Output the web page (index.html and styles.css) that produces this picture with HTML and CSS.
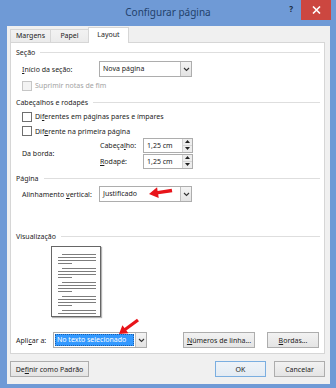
FILE: index.html
```html
<!DOCTYPE html>
<html lang="pt">
<head>
<meta charset="utf-8">
<title>Configurar página</title>
<link rel="stylesheet" href="styles.css">
</head>
<body>
<div class="window">
  <div class="titlebar">
    <div class="tb-side"></div>
    <div class="title">Configurar página</div>
    <div class="tb-side controls">
      <span class="help">?</span>
      <span class="close"><svg width="9" height="8" viewBox="0 0 9 8"><path d="M1 0.5 L8 7.5 M8 0.5 L1 7.5" stroke="#fff" stroke-width="1.6"/></svg></span>
    </div>
  </div>
  <div class="client">
    <div class="tabs">
      <div class="tab">Margens</div>
      <div class="tab">Papel</div>
      <div class="tab active">Layout</div>
    </div>
    <div class="panel">
      <div class="group"><span>Seção</span><i class="rule"></i></div>
      <div class="row indent mt1">
        <span class="lbl w77"><u>I</u>nício da seção:</span>
        <div class="select w93"><span class="val">Nova página</span><span class="drop"><svg width="7" height="5" viewBox="0 0 7 5"><path d="M1 1 L3.5 3.5 L6 1" fill="none" stroke="#333" stroke-width="1.1"/></svg></span></div>
      </div>
      <div class="check indent mt2 disabled"><span class="box"></span><span>Suprimir notas de fim</span></div>
      <div class="group mt2"><span>Cabeçalhos e rodapés</span><i class="rule"></i></div>
      <div class="check indent"><span class="box"></span><span>Di<u>f</u>erentes em páginas pares e ímpares</span></div>
      <div class="check indent mt2 h12"><span class="box"></span><span>Dif<u>e</u>rente na primeira página</span></div>
      <div class="borda indent">
        <span class="lbl w78">Da borda:</span>
        <div class="spins">
          <div class="spinrow">
            <span class="lbl w43">Cabeça<u>l</u>ho:</span>
            <div class="spin"><span class="val">1,25 cm</span><span class="arrows"><span class="half"><svg width="5" height="3" viewBox="0 0 5 3"><path d="M0 3 L2.5 0 L5 3Z" fill="#222"/></svg></span><span class="half"><svg width="5" height="3" viewBox="0 0 5 3"><path d="M0 0 L2.5 3 L5 0Z" fill="#222"/></svg></span></span></div>
          </div>
          <div class="spinrow">
            <span class="lbl w43"><u>R</u>odapé:</span>
            <div class="spin"><span class="val">1,25 cm</span><span class="arrows"><span class="half"><svg width="5" height="3" viewBox="0 0 5 3"><path d="M0 3 L2.5 0 L5 3Z" fill="#222"/></svg></span><span class="half"><svg width="5" height="3" viewBox="0 0 5 3"><path d="M0 0 L2.5 3 L5 0Z" fill="#222"/></svg></span></span></div>
          </div>
        </div>
      </div>
      <div class="group mt1"><span>Página</span><i class="rule"></i></div>
      <div class="row indent">
        <span class="lbl w77">Alinhamento <u>v</u>ertical:</span>
        <div class="select w93"><span class="val">Justificado</span><span class="drop"><svg width="7" height="5" viewBox="0 0 7 5"><path d="M1 1 L3.5 3.5 L6 1" fill="none" stroke="#333" stroke-width="1.1"/></svg></span></div>
      </div>
      <div class="group mt26"><span>Visualização</span><i class="rule"></i></div>
      <div class="page">
        <svg width="48" height="69" viewBox="0 0 48 69">
          <g stroke="#7d7d7d" stroke-width="1">
            <path d="M10 7.5H44 M6 10.5H44 M6 13.5H44 M6 16.5H20"/>
            <path d="M10 21.5H44 M6 24.5H44 M6 27.5H44 M6 30.5H20"/>
            <path d="M10 35.5H44 M6 38.5H44 M6 41.5H44 M6 44.5H20"/>
            <path d="M10 49.5H44 M6 52.5H44 M6 55.5H44 M6 58.5H20"/>
            <path d="M10 63.5H44 M6 66.5H44"/>
          </g>
        </svg>
      </div>
      <div class="row aplicar">
        <span class="lbl w37">Apli<u>c</u>ar a:</span>
        <div class="select w94"><span class="val sel"><span class="hl">No texto selecionado</span></span><span class="drop"><svg width="7" height="5" viewBox="0 0 7 5"><path d="M1 1 L3.5 3.5 L6 1" fill="none" stroke="#333" stroke-width="1.1"/></svg></span></div>
        <div class="btn b-num"><span><u>N</u>úmeros de linha...</span></div>
        <div class="btn b-bord"><span><u>B</u>ordas...</span></div>
      </div>
    </div>
    <div class="footer">
      <div class="btn b-def"><span>De<u>f</u>inir como Padrão</span></div>
      <div class="btn b-ok default"><span>OK</span></div>
      <div class="btn b-cancel"><span>Cancelar</span></div>
    </div>
  </div>
  <svg class="annot" width="336" height="388" viewBox="0 0 336 388">
    <polygon fill="#e8141a" points="149,194 157.1,187.2 157.6,191 171.7,188.8 172.3,192.2 158.2,194.3 158.7,198.1"/>
    <polygon fill="#e8141a" points="119,334 122.4,325.3 124.5,328 137,318.7 139,321.3 126.3,330.6 128.4,333.3"/>
  </svg>
</div>
</body>
</html>
```
FILE: styles.css
```css
* { box-sizing: border-box; }
html, body { margin: 0; padding: 0; }
body {
  width: 336px;
  height: 388px;
  overflow: hidden;
  background: #6f9ad6;
  font-family: "Noto Sans", "DejaVu Sans", sans-serif;
  font-size: 7px;
  color: #1c1c1c;
}
u { text-decoration: underline; text-underline-offset: 1px; }

.window {
  position: relative;
  width: 336px;
  height: 388px;
  display: flex;
  flex-direction: column;
  background: #6f9ad6;
}

.titlebar {
  height: 26px;
  flex: none;
  display: grid;
  grid-template-columns: 1fr auto 1fr;
  align-items: start;
}
.title {
  font-size: 10px;
  line-height: 24px;
  color: #22416b;
}
.controls {
  display: flex;
  justify-content: flex-end;
  align-items: flex-start;
  padding-right: 5px;
}
.help {
  font-size: 8px;
  font-weight: bold;
  color: #1b2a40;
  line-height: 18px;
  margin-right: 8px;
}
.close {
  width: 30px;
  height: 20px;
  background: #cc4740;
  display: flex;
  align-items: center;
  justify-content: center;
}

.client {
  flex: 1;
  margin: 0 6px 4px 7px;
  background: #f0f0f0;
  padding: 1px 5px 0 3px;
  display: flex;
  flex-direction: column;
}

.tabs {
  position: relative;
  z-index: 1;
  display: flex;
  align-items: flex-end;
  height: 16px;
  margin-bottom: -1px;
}
.tab {
  height: 13px;
  margin-bottom: 1px;
  margin-right: -1px;
  border: 1px solid #d6d6d6;
  border-bottom: none;
  background: linear-gradient(#f2f2f2, #ebebeb);
  display: flex;
  align-items: center;
  justify-content: center;
  padding-bottom: 1px;
}
.tab:nth-child(1) { width: 41px; }
.tab:nth-child(2) { width: 39px; }
.tab.active {
  width: 41px;
  height: 16px;
  margin-bottom: 0;
  background: #fff;
  padding-bottom: 3px;
}

.panel {
  height: 312px;
  flex: none;
  border: 1px solid #d6d6d6;
  background: #fff;
  padding: 1px 5px 0 5px;
  display: flex;
  flex-direction: column;
}

.group {
  display: flex;
  align-items: center;
  height: 16px;
  flex: none;
}
.group .rule {
  flex: 1;
  height: 1px;
  background: #dedede;
  margin-left: 5px;
  margin-right: -1px;
}

.row { display: flex; align-items: center; height: 16px; flex: none; }
.indent { padding-left: 6px; }
.mt1 { margin-top: 1px; }
.mt2 { margin-top: 2px; }
.mt26 { margin-top: 26px; }
.lbl { flex: none; white-space: nowrap; }
.w77 { width: 77px; }
.w78 { width: 78px; }
.w43 { width: 43px; }
.w37 { width: 37px; }
.w93 { width: 93px; }
.w94 { width: 94px; }

.select {
  flex: none;
  display: flex;
  height: 16px;
  border: 1px solid #adadad;
  background: #fff;
}
.select .val {
  flex: 1;
  padding-left: 3px;
  line-height: 14px;
  white-space: nowrap;
  overflow: hidden;
}
.select .val.sel { padding: 1px; display: flex; }
.select .hl {
  flex: 1;
  background: #3399ff;
  color: #fff;
  line-height: 12px;
  padding-left: 2px;
  outline: 1px dotted #1a5fae;
  outline-offset: -1px;
}
.select .drop {
  width: 11px;
  flex: none;
  border-left: 1px solid #bdbdbd;
  background: linear-gradient(#f4f4f4, #e3e3e3);
  display: flex;
  align-items: center;
  justify-content: center;
}

.check {
  display: flex;
  align-items: center;
  gap: 3px;
  height: 13px;
  flex: none;
  white-space: nowrap;
}
.check.h12 { height: 12px; }
.box {
  width: 10px;
  height: 10px;
  flex: none;
  border: 1px solid #6f6f6f;
  background: #fff;
}
.disabled { color: #a3a3a3; }
.disabled .box { border-color: #c6c6c6; background: #f3f3f3; }

.borda {
  display: flex;
  align-items: center;
  height: 32px;
  flex: none;
}
.spins { display: flex; flex-direction: column; gap: 1px; }
.spinrow { display: flex; align-items: center; height: 15px; }
.spin {
  display: flex;
  width: 50px;
  height: 15px;
  border: 1px solid #adadad;
  background: #fff;
}
.spin .val {
  flex: 1;
  padding-left: 3px;
  line-height: 13px;
  white-space: nowrap;
}
.arrows {
  width: 10px;
  flex: none;
  display: flex;
  flex-direction: column;
  border-left: 1px solid #d2d2d2;
  background: #ededed;
}
.arrows .half {
  flex: 1;
  display: flex;
  align-items: center;
  justify-content: center;
}
.arrows .half + .half { border-top: 1px solid #d6d6d6; }

.page {
  flex: none;
  margin: 2px 0 0 35px;
  width: 50px;
  height: 71px;
  border: 1px solid #666;
  background: #fff;
  box-shadow: 1px 1px 1px rgba(0, 0, 0, 0.3);
}
.page svg { display: block; }

.aplicar { margin-top: 15px; }

.btn {
  flex: none;
  height: 16px;
  border: 1px solid #adadad;
  background: linear-gradient(#f2f2f2, #e4e4e4);
  display: flex;
  align-items: center;
  justify-content: center;
  white-space: nowrap;
}
.b-num { width: 72px; margin-left: 36px; }
.b-bord { width: 52px; margin-left: 12px; }

.footer {
  display: flex;
  margin-top: 7px;
  flex: none;
}
.b-def { width: 79px; }
.b-ok { width: 51px; margin-left: auto; }
.b-cancel { width: 51px; margin-left: 8px; }
.btn.default {
  border-color: #7aaee0;
  background: linear-gradient(#eef3f8, #e3ebf3);
}

.annot {
  position: absolute;
  left: 0;
  top: 0;
  pointer-events: none;
}
```
